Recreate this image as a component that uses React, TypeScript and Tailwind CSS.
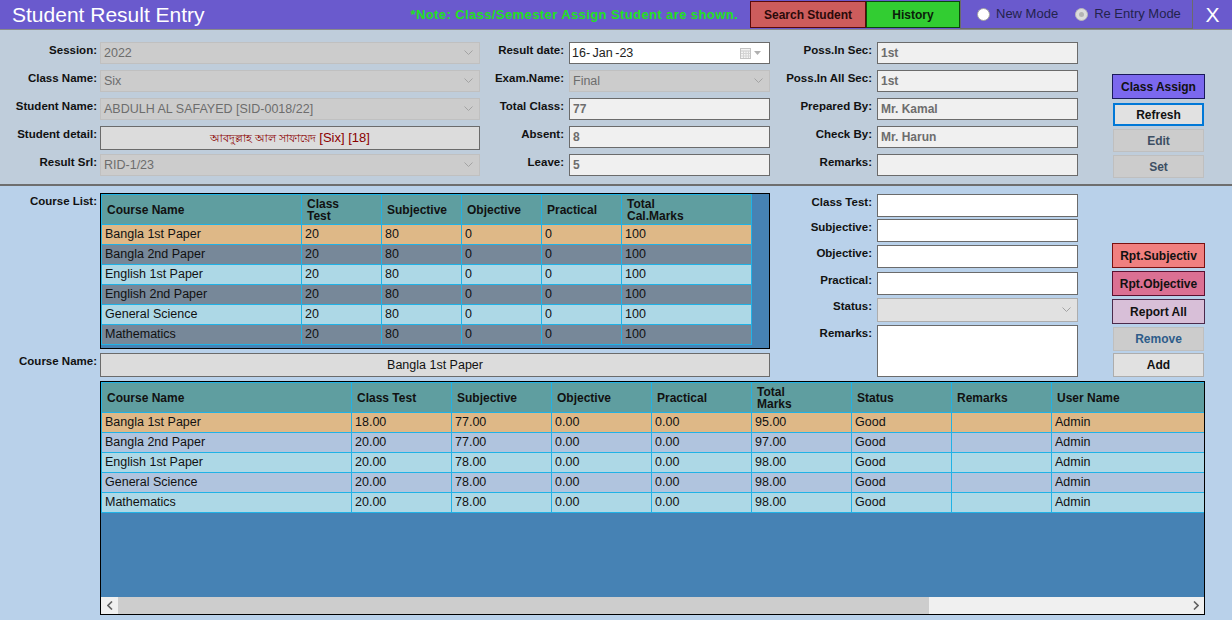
import React from "react";

const FONT = "font-['Liberation_Sans',Arial,sans-serif]";

function Chevron() {
  return (
    <svg width="9" height="6" viewBox="0 0 9 6" className="shrink-0">
      <polyline points="0.5,0.5 4.5,4.5 8.5,0.5" fill="none" stroke="#a3a3a3" strokeWidth="1" />
    </svg>
  );
}

function Combo({ value, h = "h-[22px]", w = "w-[380px]" }: { value: string; h?: string; w?: string }) {
  return (
    <div className={`${w} ${h} bg-[#cccccc] border border-[#c0c0c0] flex items-center justify-between pl-[3px] pr-[6px] text-[12.5px] text-[#6d6d6d]`}>
      <span>{value}</span>
      <Chevron />
    </div>
  );
}

function TextBox({ value, h = "h-[22px]" }: { value: string; h?: string }) {
  return (
    <div className={`w-[201px] ${h} bg-[#f0f0f0] border border-[#6b6b6b] flex items-center pl-[3px] text-[12px] font-bold text-[#6d6d6d]`}>
      {value}
    </div>
  );
}

function WhiteBox({ h = "h-[23px]" }: { h?: string }) {
  return <div className={`w-[201px] ${h} bg-white border border-[#6b6b6b]`} />;
}

function Lbl({ children, w, pr = "pr-[3px]" }: { children: React.ReactNode; w: string; pr?: string }) {
  return (
    <div className={`${w} ${pr} shrink-0 text-right text-[11.5px] font-bold text-[#111] pt-[1px] leading-[14px]`}>
      {children}
    </div>
  );
}

const courseList = [
  { n: "Bangla 1st Paper", bg: "bg-[#deb887]" },
  { n: "Bangla 2nd Paper", bg: "bg-[#778899]" },
  { n: "English 1st Paper", bg: "bg-[#add8e6]" },
  { n: "English 2nd Paper", bg: "bg-[#778899]" },
  { n: "General Science", bg: "bg-[#add8e6]" },
  { n: "Mathematics", bg: "bg-[#778899]" },
];

const results = [
  { n: "Bangla 1st Paper", ct: "18.00", s: "77.00", t: "95.00", bg: "bg-[#deb887]" },
  { n: "Bangla 2nd Paper", ct: "20.00", s: "77.00", t: "97.00", bg: "bg-[#b0c4de]" },
  { n: "English 1st Paper", ct: "20.00", s: "78.00", t: "98.00", bg: "bg-[#add8e6]" },
  { n: "General Science", ct: "20.00", s: "78.00", t: "98.00", bg: "bg-[#b0c4de]" },
  { n: "Mathematics", ct: "20.00", s: "78.00", t: "98.00", bg: "bg-[#add8e6]" },
];

const HC = "border-r border-[#20b2e6] flex items-center pl-[5px] text-[12px] font-bold text-[#111] leading-[12px]";
const DC = "border-r border-[#20b2e6] flex items-center pl-[3px] text-[12.5px] text-[#111]";

export default function App() {
  return (
    <div className={`w-[1232px] h-[620px] overflow-hidden flex flex-col ${FONT}`}>
      {/* Title bar */}
      <div className="h-[30px] shrink-0 bg-[#6a5acd] border-b border-[#8a8a8a] flex items-start">
        <div className="pl-[12px] text-[21px] leading-[29px] text-white">Student Result Entry</div>
        <div className="flex-1" />
        <div className="mr-[12px] text-[13px] tracking-[0.4px] font-bold text-[#22e022] leading-[29px]">
          *Note: Class/Semester Assign Student are shown.
        </div>
        <div className="mt-[1px] w-[116px] h-[27px] bg-[#cd5c5c] border border-[#5a0a0a] flex items-center justify-center text-[12px] font-bold text-[#2a0a0a]">
          Search Student
        </div>
        <div className="mt-[1px] w-[94px] h-[27px] bg-[#32cd32] border border-[#0a4a0a] flex items-center justify-center text-[12px] font-bold text-[#0a200a]">
          History
        </div>
        <div className="w-[233px] h-[29px] border border-[#6b6b6b] border-t-0 flex items-center pl-[16px] text-[13px] text-[#23234d]">
          <div className="w-[13px] h-[13px] rounded-full bg-white border border-[#a0a0a0]" />
          <span className="ml-[6px]">New Mode</span>
          <div className="ml-[17px] w-[13px] h-[13px] rounded-full bg-[#dcdcdc] border border-[#b8b8b8] flex items-center justify-center">
            <div className="w-[5px] h-[5px] rounded-full bg-[#b4b4b4]" />
          </div>
          <span className="ml-[6px]">Re Entry Mode</span>
        </div>
        <div className="w-[39px] flex items-center justify-center h-[29px] text-[21px] text-white">X</div>
      </div>

      {/* Top form */}
      <div className="h-[154px] shrink-0 bg-[#bfcddb] pt-[12px] flex">
        {/* left column */}
        <div className="flex flex-col">
          <div className="flex h-[28px]"><Lbl w="w-[100px]">Session:</Lbl><Combo value="2022" /></div>
          <div className="flex h-[28px]"><Lbl w="w-[100px]">Class Name:</Lbl><Combo value="Six" /></div>
          <div className="flex h-[28px]"><Lbl w="w-[100px]">Student Name:</Lbl><Combo value="ABDULH AL SAFAYED [SID-0018/22]" /></div>
          <div className="flex h-[28px]">
            <Lbl w="w-[100px]">Student detail:</Lbl>
            <div className="w-[380px] h-[24px] bg-[#dcdcdc] border border-[#6b6b6b] flex items-center justify-center text-[#8b0000]">
              <span className="text-[11px]">আবদুল্লাহ আল সাফায়েদ</span>
              <span className="text-[13px] ml-[3px]">[Six] [18]</span>
            </div>
          </div>
          <div className="flex h-[28px]"><Lbl w="w-[100px]">Result Srl:</Lbl><Combo value="RID-1/23" /></div>
        </div>
        {/* middle column */}
        <div className="flex flex-col">
          <div className="flex h-[28px]">
            <Lbl w="w-[89px]" pr="pr-[5px]">Result date:</Lbl>
            <div className="w-[201px] h-[22px] bg-white border border-[#6b6b6b] flex items-center justify-between pl-[2px] pr-[8px] text-[12.5px] text-[#222]">
              <span>16-&thinsp;Jan&thinsp;-23</span>
              <span className="flex items-center gap-[3px]">
                <svg width="11" height="11" viewBox="0 0 11 11">
                  <rect x="0.5" y="0.5" width="10" height="10" fill="#f4f4f4" stroke="#c4c4c4" />
                  <line x1="1" y1="3" x2="10" y2="3" stroke="#c8c8c8" />
                  <line x1="1" y1="5.5" x2="10" y2="5.5" stroke="#d4d4d4" />
                  <line x1="1" y1="8" x2="10" y2="8" stroke="#d4d4d4" />
                  <line x1="3.5" y1="3" x2="3.5" y2="10" stroke="#d4d4d4" />
                  <line x1="6" y1="3" x2="6" y2="10" stroke="#d4d4d4" />
                  <line x1="8.5" y1="3" x2="8.5" y2="10" stroke="#d4d4d4" />
                </svg>
                <svg width="7" height="4" viewBox="0 0 7 4"><polygon points="0,0 7,0 3.5,4" fill="#b0b0b0" /></svg>
              </span>
            </div>
          </div>
          <div className="flex h-[28px]"><Lbl w="w-[89px]" pr="pr-[5px]">Exam.Name:</Lbl><Combo value="Final" w="w-[201px]" /></div>
          <div className="flex h-[28px]"><Lbl w="w-[89px]" pr="pr-[5px]">Total Class:</Lbl><TextBox value="77" /></div>
          <div className="flex h-[28px]"><Lbl w="w-[89px]" pr="pr-[5px]">Absent:</Lbl><TextBox value="8" /></div>
          <div className="flex h-[28px]"><Lbl w="w-[89px]" pr="pr-[5px]">Leave:</Lbl><TextBox value="5" /></div>
        </div>
        {/* right column */}
        <div className="flex flex-col">
          <div className="flex h-[28px]"><Lbl w="w-[107px]" pr="pr-[5px]">Poss.In Sec:</Lbl><TextBox value="1st" /></div>
          <div className="flex h-[28px]"><Lbl w="w-[107px]" pr="pr-[5px]">Poss.In All Sec:</Lbl><TextBox value="1st" /></div>
          <div className="flex h-[28px]"><Lbl w="w-[107px]" pr="pr-[5px]">Prepared By:</Lbl><TextBox value="Mr. Kamal" /></div>
          <div className="flex h-[28px]"><Lbl w="w-[107px]" pr="pr-[5px]">Check By:</Lbl><TextBox value="Mr. Harun" /></div>
          <div className="flex h-[28px]"><Lbl w="w-[107px]" pr="pr-[5px]">Remarks:</Lbl><TextBox value="" /></div>
        </div>
        {/* buttons */}
        <div className="ml-[34px] w-[93px] flex flex-col pt-[32px] text-[12px] font-bold">
          <div className="h-[25px] bg-[#7b68ee] border border-[#1a1a5a] flex items-center justify-center text-[#111]">Class Assign</div>
          <div className="mt-[4px] mx-[1px] h-[23px] bg-[#e1e1e1] border-2 border-[#0078d7] flex items-center justify-center text-[#111]">Refresh</div>
          <div className="mt-[3px] mx-[1px] h-[23px] bg-[#cccccc] border border-[#bfbfbf] flex items-center justify-center text-[#3d4f63]">Edit</div>
          <div className="mt-[3px] mx-[1px] h-[23px] bg-[#cccccc] border border-[#bfbfbf] flex items-center justify-center text-[#3d4f63]">Set</div>
        </div>
      </div>
      <div className="h-[2px] shrink-0 bg-[#6e6e6e]" />

      {/* Lower section */}
      <div className="flex-1 bg-[#b9d1ea] pt-[7px] flex flex-col">
        <div className="flex">
          {/* left part */}
          <div className="w-[770px] flex flex-col">
            <div className="flex">
              <Lbl w="w-[100px]">Course List:</Lbl>
              <div className="w-[670px] h-[156px] border border-black bg-[#4682b4] flex flex-col">
                <div className="w-[651px] h-[31px] flex border-l border-t border-b border-[#20b2e6] bg-[#5f9ea0]">
                  <div className={`${HC} w-[200px]`}>Course Name</div>
                  <div className={`${HC} w-[80px]`}>Class<br />Test</div>
                  <div className={`${HC} w-[80px]`}>Subjective</div>
                  <div className={`${HC} w-[80px]`}>Objective</div>
                  <div className={`${HC} w-[80px]`}>Practical</div>
                  <div className={`${HC} w-[130px]`}>Total<br />Cal.Marks</div>
                </div>
                {courseList.map((r) => (
                  <div key={r.n} className={`w-[651px] h-[20px] flex border-l border-b border-[#20b2e6] ${r.bg}`}>
                    <div className={`${DC} w-[200px]`}>{r.n}</div>
                    <div className={`${DC} w-[80px]`}>20</div>
                    <div className={`${DC} w-[80px]`}>80</div>
                    <div className={`${DC} w-[80px]`}>0</div>
                    <div className={`${DC} w-[80px]`}>0</div>
                    <div className={`${DC} w-[130px]`}>100</div>
                  </div>
                ))}
              </div>
            </div>
            <div className="flex mt-[4px]">
              <Lbl w="w-[100px]">Course Name:</Lbl>
              <div className="w-[670px] h-[24px] bg-[#dcdcdc] border border-[#6b6b6b] flex items-center justify-center text-[12.5px] text-[#111]">
                Bangla 1st Paper
              </div>
            </div>
          </div>
          {/* right form */}
          <div className="w-[308px] flex flex-col">
            <div className="flex mt-[1px]"><Lbl w="w-[107px]" pr="pr-[5px]">Class Test:</Lbl><WhiteBox /></div>
            <div className="flex mt-[2px]"><Lbl w="w-[107px]" pr="pr-[5px]">Subjective:</Lbl><WhiteBox /></div>
            <div className="flex mt-[3px]"><Lbl w="w-[107px]" pr="pr-[5px]">Objective:</Lbl><WhiteBox /></div>
            <div className="flex mt-[4px]"><Lbl w="w-[107px]" pr="pr-[5px]">Practical:</Lbl><WhiteBox /></div>
            <div className="flex mt-[3px]">
              <Lbl w="w-[107px]" pr="pr-[5px]">Status:</Lbl>
              <div className="w-[201px] h-[24px] bg-[#e1e1e1] border border-[#adadad] flex items-center justify-end pr-[6px]">
                <Chevron />
              </div>
            </div>
            <div className="flex mt-[3px]"><Lbl w="w-[107px]" pr="pr-[5px]">Remarks:</Lbl><WhiteBox h="h-[52px]" /></div>
          </div>
          {/* buttons */}
          <div className="ml-[34px] w-[93px] flex flex-col pt-[50px] text-[12px] font-bold">
            <div className="h-[25px] bg-[#f08080] border border-[#7a1010] flex items-center justify-center text-[#111]">Rpt.Subjectiv</div>
            <div className="mt-[3px] h-[25px] bg-[#db7093] border border-[#5a1030] flex items-center justify-center text-[#111]">Rpt.Objective</div>
            <div className="mt-[3px] h-[25px] bg-[#d8bfd8] border border-[#4b2a4b] flex items-center justify-center text-[#111]">Report All</div>
            <div className="mt-[3px] mx-[1px] h-[24px] bg-[#cccccc] border border-[#bfbfbf] flex items-center justify-center text-[#2e5c8a]">Remove</div>
            <div className="mt-[2px] mx-[1px] h-[24px] bg-[#e1e1e1] border border-[#adadad] flex items-center justify-center text-[#111]">Add</div>
          </div>
        </div>

        {/* bottom grid */}
        <div className="ml-[100px] mt-[4px] w-[1105px] h-[234px] border border-black bg-[#4682b4] flex flex-col">
          <div className="h-[31px] shrink-0 flex border-l border-t border-b border-[#20b2e6] bg-[#5f9ea0]">
            <div className={`${HC} w-[250px]`}>Course Name</div>
            <div className={`${HC} w-[100px]`}>Class Test</div>
            <div className={`${HC} w-[100px]`}>Subjective</div>
            <div className={`${HC} w-[100px]`}>Objective</div>
            <div className={`${HC} w-[100px]`}>Practical</div>
            <div className={`${HC} w-[100px]`}>Total<br />Marks</div>
            <div className={`${HC} w-[100px]`}>Status</div>
            <div className={`${HC} w-[100px]`}>Remarks</div>
            <div className="flex-1 flex items-center pl-[5px] text-[12px] font-bold text-[#111]">User Name</div>
          </div>
          {results.map((r) => (
            <div key={r.n} className={`h-[20px] shrink-0 flex border-l border-b border-[#20b2e6] ${r.bg}`}>
              <div className={`${DC} w-[250px]`}>{r.n}</div>
              <div className={`${DC} w-[100px]`}>{r.ct}</div>
              <div className={`${DC} w-[100px]`}>{r.s}</div>
              <div className={`${DC} w-[100px]`}>0.00</div>
              <div className={`${DC} w-[100px]`}>0.00</div>
              <div className={`${DC} w-[100px]`}>{r.t}</div>
              <div className={`${DC} w-[100px]`}>Good</div>
              <div className={`${DC} w-[100px]`}></div>
              <div className="flex-1 flex items-center pl-[3px] text-[12.5px] text-[#111]">Admin</div>
            </div>
          ))}
          <div className="flex-1" />
          <div className="h-[17px] shrink-0 bg-[#f0f0f0] flex items-center">
            <div className="w-[17px] h-[17px] flex items-center justify-center">
              <svg width="6" height="9" viewBox="0 0 6 9"><polyline points="5,0.5 1,4.5 5,8.5" fill="none" stroke="#606060" strokeWidth="1.6" /></svg>
            </div>
            <div className="w-[811px] h-[17px] bg-[#cdcdcd]" />
            <div className="flex-1" />
            <div className="w-[17px] h-[17px] flex items-center justify-center">
              <svg width="6" height="9" viewBox="0 0 6 9"><polyline points="1,0.5 5,4.5 1,8.5" fill="none" stroke="#606060" strokeWidth="1.6" /></svg>
            </div>
          </div>
        </div>
      </div>
    </div>
  );
}
